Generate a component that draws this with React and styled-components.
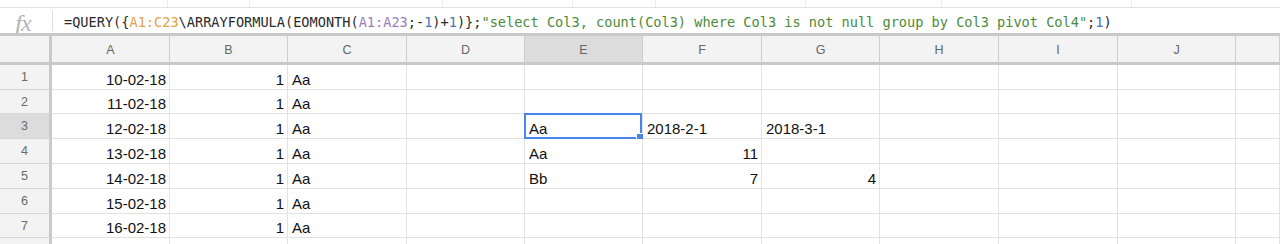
import React from "react";
import styled, { createGlobalStyle } from "styled-components";

const Global = createGlobalStyle`
  html, body { margin: 0; padding: 0; background: #fff; }
  body { font-family: "Liberation Sans", Arial, sans-serif; overflow: hidden; }
`;

const Page = styled.div`
  width: 1280px;
  height: 244px;
  overflow: hidden;
  display: flex;
  flex-direction: column;
`;

const Toolbar = styled.div`
  display: flex;
  flex-shrink: 0;
  height: 7px;
  border-bottom: 1px solid #e3e3e3;
`;

const ToolSection = styled.div`
  flex: 0 0 ${(p) => p.$w}px;
  border-right: 1px solid #ececec;
  box-sizing: border-box;
  &:last-child { border-right: none; flex: 1; }
`;

const FormulaBar = styled.div`
  display: flex;
  flex-shrink: 0;
  align-items: center;
  height: 25px;
`;

const FxLabel = styled.div`
  width: 53px;
  height: 20px;
  box-sizing: border-box;
  border-right: 1px solid #dcdcdc;
  display: flex;
  align-items: center;
  justify-content: center;
  padding: 5px 6px 0 0;
  font-family: "Liberation Serif", "Times New Roman", serif;
  font-style: italic;
  font-size: 24px;
  line-height: 20px;
  color: #b3b3b3;
  letter-spacing: -1px;
`;

const FormulaText = styled.div`
  padding-left: 11px;
  padding-top: 3px;
  font-family: "DejaVu Sans Mono", "Liberation Mono", monospace;
  font-size: 13.6px;
  color: #2b2b2b;
  white-space: pre;
`;

const Tok = styled.span`
  color: ${(p) =>
    p.$k === "range1"
      ? "#e4a245"
      : p.$k === "range2"
      ? "#9a7cc2"
      : p.$k === "num"
      ? "#3d78c0"
      : p.$k === "str"
      ? "#4b8a3b"
      : "#2b2b2b"};
`;

const Sheet = styled.div`
  display: grid;
  grid-template-columns: 52px 118px 118px 119px 118px 118px 119px 118px 119px 119px 118px 1fr;
  grid-template-rows: 29px 25px 24px 25px 25px 25px 25px 24px 20px;
  flex: 1;
  min-height: 0;
  overflow: hidden;
  border-top: 3px solid #c9c9c9;
  box-sizing: border-box;
`;

const Corner = styled.div`
  background: #f3f3f3;
  border-right: 3px solid #c9c9c9;
  border-bottom: 3px solid #c9c9c9;
`;

const ColHeader = styled.div`
  background: ${(p) => (p.$active ? "#dcdcdc" : "#f3f3f3")};
  border-right: 1px solid #cdcdcd;
  border-bottom: 3px solid #c9c9c9;
  display: flex;
  align-items: center;
  justify-content: center;
  padding-top: 2px;
  font-size: 12.5px;
  color: #666;
`;

const RowHeader = styled.div`
  background: ${(p) => (p.$active ? "#dcdcdc" : "#f3f3f3")};
  border-right: 3px solid #c9c9c9;
  border-bottom: 1px solid #d6d6d6;
  display: flex;
  align-items: flex-start;
  justify-content: center;
  padding-top: 5px;
  overflow: hidden;
  font-size: 12.5px;
  line-height: 14px;
  color: #6a6a6a;
`;

const Cell = styled.div`
  position: relative;
  background: #fff;
  border-right: 1px solid #e2e2e2;
  border-bottom: 1px solid #e2e2e2;
  display: flex;
  align-items: flex-end;
  justify-content: ${(p) => (p.$num ? "flex-end" : "flex-start")};
  padding: 0 3px 0 4px;
  font-size: 15px;
  line-height: 18px;
  color: #111;
  white-space: nowrap;
`;

const Selection = styled.div`
  position: absolute;
  top: -1px;
  left: -1px;
  right: 0;
  bottom: -1px;
  border: 2px solid #4a86e8;
  pointer-events: none;
`;

const Handle = styled.div`
  position: absolute;
  right: -4px;
  bottom: -4px;
  width: 6px;
  height: 6px;
  background: #4a86e8;
  border: 1px solid #fff;
  box-sizing: content-box;
`;

const columns = ["A", "B", "C", "D", "E", "F", "G", "H", "I", "J", ""];

const data = {
  3: { E: { v: "Aa", sel: true }, F: { v: "2018-2-1" }, G: { v: "2018-3-1" } },
  4: { E: { v: "Aa" }, F: { v: "11", num: true } },
  5: { E: { v: "Bb" }, F: { v: "7", num: true }, G: { v: "4", num: true } },
};

function getCell(row, col) {
  if (row >= 1 && row <= 7) {
    if (col === "A") return { v: `${9 + row}-02-18`, num: true };
    if (col === "B") return { v: "1", num: true };
    if (col === "C") return { v: "Aa" };
  }
  return (data[row] && data[row][col]) || null;
}

const formula = [
  ["t", "=QUERY({"],
  ["range1", "A1:C23"],
  ["t", "\\ARRAYFORMULA(EOMONTH("],
  ["range2", "A1:A23"],
  ["t", ";-"],
  ["num", "1"],
  ["t", ")+"],
  ["num", "1"],
  ["t", ")};"],
  ["str", '"select Col3, count(Col3) where Col3 is not null group by Col3 pivot Col4"'],
  ["t", ";"],
  ["num", "1"],
  ["t", ")"],
];

const toolWidths = [168, 82, 193, 130, 83, 150, 136, 190, 148];

export default function App() {
  const rows = [1, 2, 3, 4, 5, 6, 7, 8];
  return (
    <Page>
      <Global />
      <Toolbar>
        {toolWidths.map((w, i) => (
          <ToolSection key={i} $w={w} />
        ))}
      </Toolbar>
      <FormulaBar>
        <FxLabel>fx</FxLabel>
        <FormulaText>
          {formula.map(([k, s], i) => (
            <Tok key={i} $k={k}>
              {s}
            </Tok>
          ))}
        </FormulaText>
      </FormulaBar>
      <Sheet>
        <Corner />
        {columns.map((c, i) => (
          <ColHeader key={i} $active={c === "E"}>
            {c}
          </ColHeader>
        ))}
        {rows.map((r) => (
          <React.Fragment key={r}>
            <RowHeader $active={r === 3}>{r}</RowHeader>
            {columns.map((c, i) => {
              const cell = getCell(r, c);
              return (
                <Cell key={i} $num={cell && cell.num}>
                  {cell ? cell.v : ""}
                  {cell && cell.sel && (
                    <Selection>
                      <Handle />
                    </Selection>
                  )}
                </Cell>
              );
            })}
          </React.Fragment>
        ))}
      </Sheet>
    </Page>
  );
}
